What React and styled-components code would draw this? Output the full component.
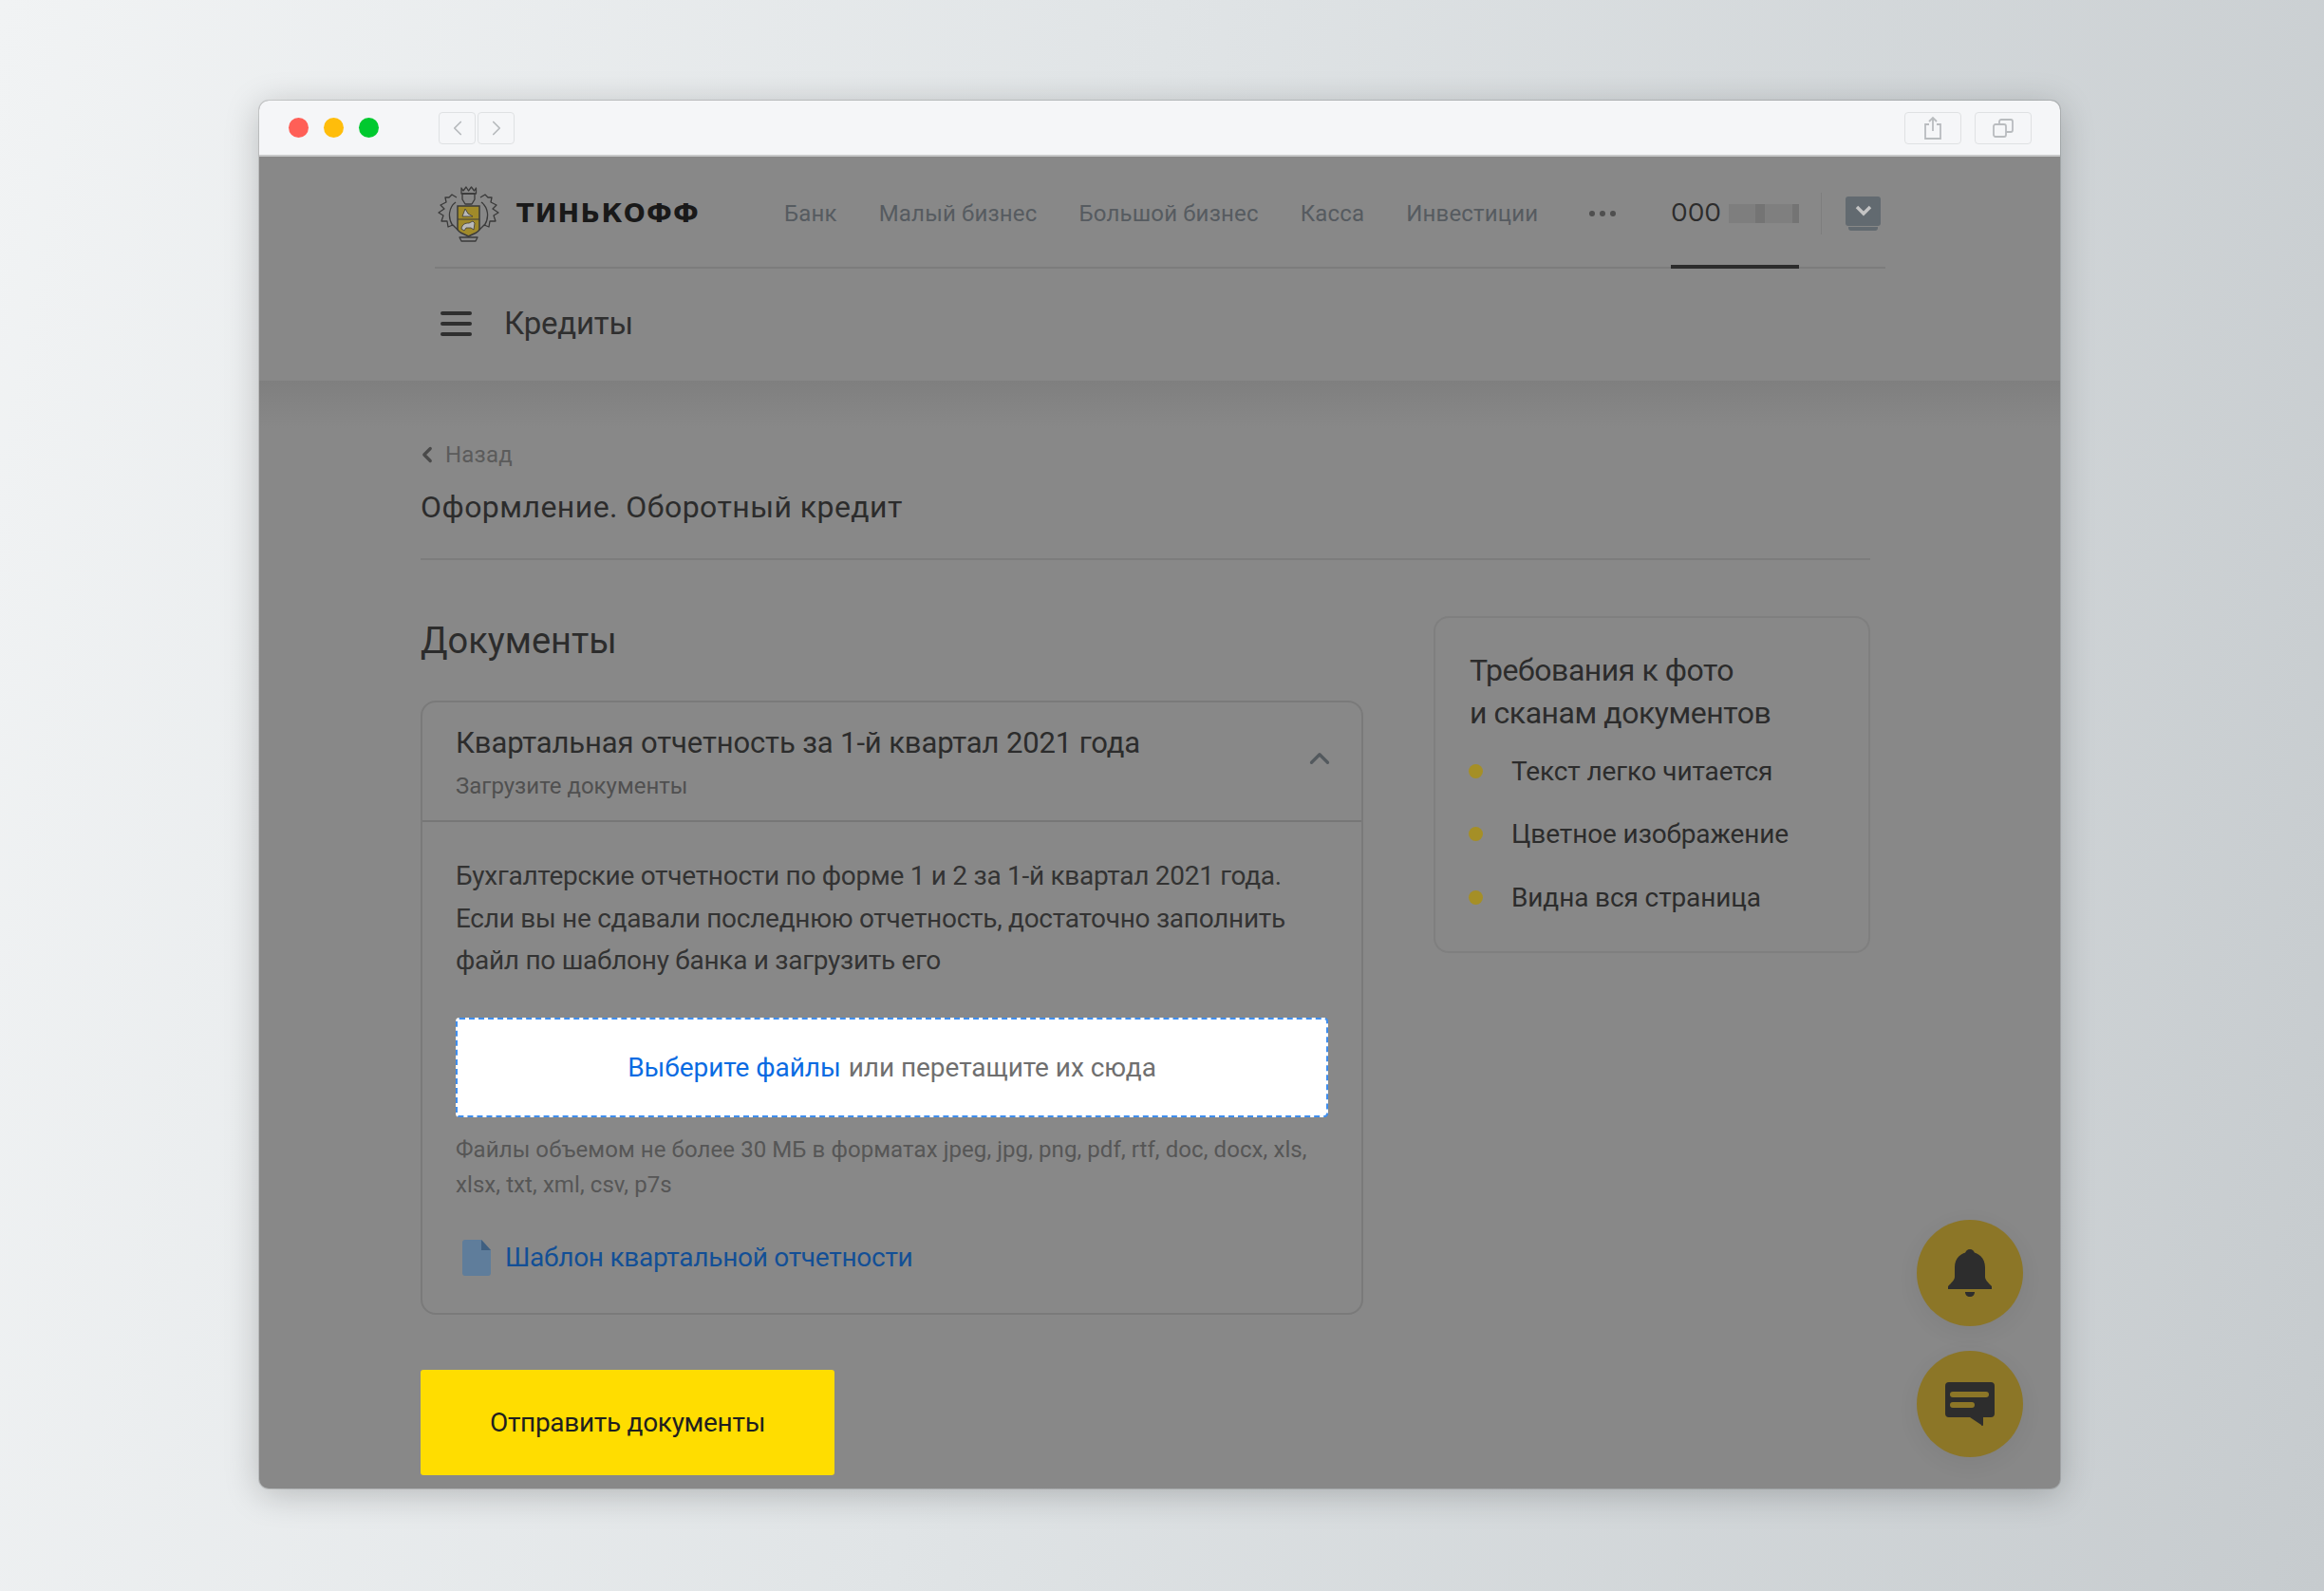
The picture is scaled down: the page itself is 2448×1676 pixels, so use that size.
import styled, { createGlobalStyle } from "styled-components";
import { ChevronLeft, ChevronRight, ChevronUp } from "lucide-react";

const Global = createGlobalStyle`
  html, body {
    margin: 0;
    padding: 0;
  }
  body {
    font-family: Roboto, "Liberation Sans", sans-serif;
  }
`;

const Page = styled.div`
  width: 2448px;
  height: 1676px;
  box-sizing: border-box;
  padding: 106px 278px 108px 273px;
  background: linear-gradient(100deg, #f1f3f4 0%, #e0e4e6 45%, #c6cbce 100%);
  overflow: hidden;
`;

const Window = styled.div`
  position: relative;
  height: 100%;
  border-radius: 10px;
  overflow: hidden;
  background: #888888;
  box-shadow: 0 6px 36px rgba(0, 0, 0, 0.22), 0 0 0 1px rgba(0, 0, 0, 0.12);
`;

const TitleBar = styled.div`
  height: 59px;
  box-sizing: border-box;
  display: flex;
  align-items: center;
  padding: 0 30px 0 31px;
  background: #f5f6f8;
  border-bottom: 2px solid #c8c9ca;
`;

const Light = styled.span`
  width: 21px;
  height: 21px;
  margin-right: 16px;
  border-radius: 50%;
  background: ${(p) => p.$color};
`;

const NavButtons = styled.div`
  display: flex;
  gap: 2px;
  margin-left: 47px;
`;

const BarButton = styled.div`
  width: ${(p) => p.$width}px;
  height: 34px;
  display: flex;
  align-items: center;
  justify-content: center;
  box-sizing: border-box;
  border: 1px solid #dfe1e3;
  border-radius: 4px;
  color: #b6b9bc;
`;

const BarRight = styled.div`
  display: flex;
  gap: 14px;
  margin-left: auto;
`;

const Header = styled.header`
  height: 236px;
  box-sizing: border-box;
  padding: 0 184px 0 185px;
  background: #888888;
`;

const TopRow = styled.div`
  height: 118px;
  box-sizing: border-box;
  display: flex;
  align-items: center;
  border-bottom: 2px solid #7c7c7c;
  padding-top: 3px;
`;

const LogoWrap = styled.div`
  display: flex;
  align-items: center;
  margin-left: 2px;
  gap: 17px;
  width: 366px;
`;

const LogoText = styled.span`
  font-family: "DejaVu Sans", sans-serif;
  font-weight: 700;
  font-size: 27px;
  letter-spacing: 1.3px;
  color: #191919;
`;

const Nav = styled.nav`
  display: flex;
  align-items: center;
  gap: 44px;
`;

const NavLink = styled.span`
  font-size: 24px;
  letter-spacing: 0.18px;
  color: #565b60;
`;

const Dots = styled.div`
  display: flex;
  gap: 5px;
  margin-left: 10px;
`;

const Dot = styled.span`
  width: 6px;
  height: 6px;
  border-radius: 50%;
  background: #4f4f4f;
`;

const Account = styled.div`
  position: relative;
  align-self: stretch;
  display: flex;
  align-items: center;
  gap: 8px;
  margin-left: 58px;
  font-size: 25px;
  letter-spacing: 0.4px;
  color: #2c2c2c;
  &::after {
    content: "";
    position: absolute;
    left: 0;
    right: 0;
    bottom: -2px;
    height: 4px;
    background: #2c2c2c;
  }
`;

const Redacted = styled.span`
  width: 74px;
  height: 20px;
  background: linear-gradient(
    90deg,
    #7e7e7e 0 38%,
    #747474 38% 51%,
    #7f7f7f 51% 90%,
    #747474 90% 100%
  );
`;

const Divider = styled.span`
  width: 1px;
  height: 44px;
  margin-left: 23px;
  background: #7e7e7e;
`;

const Tray = styled.div`
  display: flex;
  flex-direction: column;
  align-items: center;
  gap: 1px;
  margin-left: 25px;
`;

const TrayTop = styled.div`
  width: 37px;
  height: 31px;
  border-radius: 3px;
  display: flex;
  align-items: center;
  justify-content: center;
  background: #626a70;
  color: #c4c4c4;
`;

const TrayBottom = styled.div`
  width: 31px;
  height: 4px;
  border-radius: 0 0 3px 3px;
  background: #626a70;
`;

const MenuRow = styled.div`
  height: 118px;
  display: flex;
  align-items: center;
  gap: 34px;
  padding-left: 6px;
  padding-bottom: 3px;
  box-sizing: border-box;
`;

const Burger = styled.div`
  width: 33px;
  display: flex;
  flex-direction: column;
  gap: 7px;
`;

const BurgerBar = styled.span`
  height: 4px;
  border-radius: 2px;
  background: #2f2f2f;
`;

const MenuTitle = styled.div`
  font-size: 33px;
  letter-spacing: -0.2px;
  color: #2f2f2f;
`;

const Main = styled.main`
  padding: 0 200px 0 170px;
  background: linear-gradient(#7f7f7f 0, #888888 50px);
`;

const Back = styled.div`
  display: flex;
  align-items: center;
  gap: 6px;
  padding-top: 63px;
  height: 30px;
  font-size: 24px;
  letter-spacing: 0.2px;
  color: #5b5b5b;
`;

const PageTitle = styled.h1`
  margin: 21px 0 0;
  padding-bottom: 35px;
  font-size: 32px;
  line-height: 38px;
  font-weight: 400;
  letter-spacing: 0.45px;
  color: #2c2c2c;
  border-bottom: 2px solid #7c7c7c;
`;

const Columns = styled.div`
  display: grid;
  grid-template-columns: 993px 460px;
  column-gap: 74px;
`;

const Section = styled.h2`
  margin: 61px 0 39px;
  font-size: 38px;
  line-height: 48px;
  font-weight: 400;
  color: #2c2c2c;
`;

const Card = styled.section`
  box-sizing: border-box;
  border: 2px solid #7a7a7a;
  border-radius: 16px;
`;

const CardHead = styled.div`
  position: relative;
  height: 126px;
  box-sizing: border-box;
  padding: 24px 35px 0;
  border-bottom: 2px solid #777777;
`;

const CardTitle = styled.div`
  font-size: 31px;
  line-height: 38px;
  letter-spacing: -0.12px;
  color: #2c2c2c;
`;

const CardSub = styled.div`
  margin-top: 12px;
  font-size: 24px;
  line-height: 28px;
  color: #505050;
`;

const Toggle = styled.span`
  position: absolute;
  right: 27px;
  top: 42px;
  display: flex;
  color: #53595e;
`;

const CardBody = styled.div`
  padding: 35px 35px 0;
  height: 517px;
  box-sizing: border-box;
`;

const Lines = styled.p`
  margin: 0;
  font-size: 28px;
  line-height: 44.5px;
  letter-spacing: -0.28px;
  color: #333333;
`;

const Drop = styled.div`
  height: 105px;
  margin-top: 37px;
  box-sizing: border-box;
  display: flex;
  align-items: center;
  justify-content: center;
  gap: 8px;
  background: #ffffff;
  border: 2px dashed #3f8eee;
  border-radius: 4px;
  font-size: 28px;
  letter-spacing: -0.05px;
  color: #6f6f6f;
`;

const Pick = styled.span`
  color: #0a6be2;
`;

const Hint = styled.p`
  margin: 16px 0 0;
  font-size: 24px;
  line-height: 37px;
  letter-spacing: 0.08px;
  color: #565656;
`;

const FileLink = styled.div`
  display: flex;
  align-items: center;
  gap: 15px;
  margin-top: 38px;
  padding-left: 7px;
  font-size: 28px;
  line-height: 40px;
  letter-spacing: -0.27px;
  color: #124f96;
`;

const Submit = styled.button`
  display: block;
  width: 436px;
  height: 111px;
  margin-top: 58px;
  border: none;
  border-radius: 3px;
  background: #ffdd00;
  font-family: inherit;
  font-size: 28px;
  letter-spacing: -0.3px;
  color: #1f1f1f;
`;

const Aside = styled.aside`
  box-sizing: border-box;
  height: 355px;
  margin-top: 59px;
  padding: 33px 36px 0;
  border: 2px solid #7f7f7f;
  border-radius: 16px;
`;

const AsideTitle = styled.div`
  font-size: 32px;
  line-height: 45px;
  letter-spacing: -0.45px;
  color: #2c2c2c;
`;

const List = styled.ul`
  margin: 5px 0 0;
  padding: 0;
  list-style: none;
`;

const Item = styled.li`
  display: flex;
  align-items: center;
  gap: 30px;
  height: 66.5px;
  font-size: 28px;
  letter-spacing: -0.12px;
  color: #2c2c2c;
`;

const Bullet = styled.span`
  width: 15px;
  height: 15px;
  margin-left: -1px;
  border-radius: 50%;
  background: #a58f26;
`;

const Fabs = styled.div`
  position: absolute;
  right: 39px;
  bottom: 33px;
  display: flex;
  flex-direction: column;
  gap: 26px;
`;

const Fab = styled.div`
  width: 112px;
  height: 112px;
  border-radius: 50%;
  display: flex;
  align-items: center;
  justify-content: center;
  background: #8c7627;
  box-shadow: 0 6px 24px rgba(0, 0, 0, 0.06);
`;

const Crest = () => (
  <svg width="67" height="60" viewBox="0 0 67 60" fill="none">
    {/* mantling */}
    <g stroke="#3a3a3a" strokeWidth="1.3" strokeLinejoin="round">
      <path d="M21 13l-5-3-3 3-4 0 1 5-6 3 4 4-6 4 5 3-2 6 6 0 1 6 5-2 5 5 3 2" />
      <path d="M46 13l5-3 3 3 4 0-1 5 6 3-4 4 6 4-5 3 2 6-6 0-1 6-5-2-5 5-3 2" />
      <path d="M20 18c-7 5-9 16-3 25M47 18c7 5 9 16 3 25" />
      <path d="M26 3l2 3 3-4 2.500 4 3-4 3 4 2-3 0 6h-15.500z" />
      <path d="M27 9h13v6l-3 5h-7l-3-5z" />
      <path d="M24 55h19l-2 4h-15z" />
    </g>
    {/* shield */}
    <path
      d="M22 22h23v24c0 4-6 5-11.500 8-5.500-3-11.500-4-11.500-8z"
      fill="#a08a2a"
      stroke="#3a3a3a"
      strokeWidth="1.500"
    />
    <path d="M22 36h23" stroke="#3a3a3a" strokeWidth="1.200" />
    <path d="M27 33l3-8 3 5 5 3z" fill="#b9b9b9" stroke="#3a3a3a" strokeWidth="0.800" />
    <path d="M26 46c1-5 4-6 8-6l4-2 2 2-1 7-3-2h-5l-2 3z" fill="#b9b9b9" stroke="#3a3a3a" strokeWidth="0.800" />
  </svg>
);

const ShareIcon = () => (
  <svg width="20" height="26" viewBox="0 0 20 26" fill="none" stroke="#b9bcbf" strokeWidth="1.800">
    <path d="M6 9H2v15h16V9h-4" />
    <path d="M10 16V2M6 6l4-4 4 4" />
  </svg>
);

const CopyIcon = () => (
  <svg width="22" height="20" viewBox="0 0 22 20" fill="none" stroke="#b9bcbf" strokeWidth="1.800">
    <rect x="1" y="6" width="13" height="13" rx="2" />
    <path d="M7 6V3a2 2 0 0 1 2-2h10a2 2 0 0 1 2 2v9a2 2 0 0 1-2 2h-5" />
  </svg>
);

const DocIcon = () => (
  <svg width="30" height="38" viewBox="0 0 30 38">
    <path d="M3 0h17l10 11v24a3 3 0 0 1-3 3H3a3 3 0 0 1-3-3V3a3 3 0 0 1 3-3z" fill="#5f7d9b" />
    <path d="M20 0l10 11h-10z" fill="#3f5f80" />
  </svg>
);

const BellIcon = () => (
  <svg width="46" height="50" viewBox="0 0 46 50" fill="#2d2d2d">
    <circle cx="23" cy="5" r="5" />
    <path d="M23 3c-9 0-16 6-16 16v10c0 3-3 6-7 10v3h46v-3c-4-4-7-7-7-10V19c0-10-7-16-16-16z" />
    <path d="M18 45h10c0 3-2 5-5 5s-5-2-5-5z" />
  </svg>
);

const ChatIcon = () => (
  <svg width="52" height="46" viewBox="0 0 52 46">
    <path
      d="M4 0h44a4 4 0 0 1 4 4v29a4 4 0 0 1-4 4H40v8a1 1 0 0 1-2 0L26 37H4a4 4 0 0 1-4-4V4a4 4 0 0 1 4-4z"
      fill="#2d2d2d"
    />
    <rect x="5" y="10" width="41" height="6" rx="3" fill="#8c7627" />
    <rect x="5" y="21" width="26" height="6" rx="3" fill="#8c7627" />
  </svg>
);

const requirements = ["Текст легко читается", "Цветное изображение", "Видна вся страница"];
const links = ["Банк", "Малый бизнес", "Большой бизнес", "Касса", "Инвестиции"];

export default function App() {
  return (
    <Page>
      <Global />
      <Window>
        <TitleBar>
          <Light $color="#ff5f57" />
          <Light $color="#ffbd0b" />
          <Light $color="#00c92f" />
          <NavButtons>
            <BarButton $width={39}>
              <ChevronLeft size={26} strokeWidth={1.6} />
            </BarButton>
            <BarButton $width={39}>
              <ChevronRight size={26} strokeWidth={1.6} />
            </BarButton>
          </NavButtons>
          <BarRight>
            <BarButton $width={60}>
              <ShareIcon />
            </BarButton>
            <BarButton $width={60}>
              <CopyIcon />
            </BarButton>
          </BarRight>
        </TitleBar>

        <Header>
          <TopRow>
            <LogoWrap>
              <Crest />
              <LogoText>ТИНЬКОФФ</LogoText>
            </LogoWrap>
            <Nav>
              {links.map((l) => (
                <NavLink key={l}>{l}</NavLink>
              ))}
              <Dots>
                <Dot />
                <Dot />
                <Dot />
              </Dots>
            </Nav>
            <Account>
              ООО <Redacted />
            </Account>
            <Divider />
            <Tray>
              <TrayTop>
                <svg width="18" height="12" viewBox="0 0 18 12" fill="none" stroke="currentColor" strokeWidth="3.500">
                  <path d="M2 2l7 7 7-7" />
                </svg>
              </TrayTop>
              <TrayBottom />
            </Tray>
          </TopRow>
          <MenuRow>
            <Burger>
              <BurgerBar />
              <BurgerBar />
              <BurgerBar />
            </Burger>
            <MenuTitle>Кредиты</MenuTitle>
          </MenuRow>
        </Header>

        <Main>
          <Back>
            <ChevronLeft size={26} strokeWidth={3} color="#4a4a4a" style={{ marginLeft: -6 }} />
            Назад
          </Back>
          <PageTitle>Оформление. Оборотный кредит</PageTitle>
          <Columns>
            <div>
              <Section>Документы</Section>
              <Card>
                <CardHead>
                  <CardTitle>Квартальная отчетность за 1-й квартал 2021 года</CardTitle>
                  <CardSub>Загрузите документы</CardSub>
                  <Toggle>
                    <ChevronUp size={34} strokeWidth={2.3} />
                  </Toggle>
                </CardHead>
                <CardBody>
                  <Lines>
                    Бухгалтерские отчетности по форме 1 и 2 за 1-й квартал 2021 года.
                    <br />
                    Если вы не сдавали последнюю отчетность, достаточно заполнить
                    <br />
                    файл по шаблону банка и загрузить его
                  </Lines>
                  <Drop>
                    <Pick>Выберите файлы</Pick> или перетащите их сюда
                  </Drop>
                  <Hint>
                    Файлы объемом не более 30 МБ в форматах jpeg, jpg, png, pdf, rtf, doc, docx, xls,
                    <br />
                    xlsx, txt, xml, csv, p7s
                  </Hint>
                  <FileLink>
                    <DocIcon />
                    Шаблон квартальной отчетности
                  </FileLink>
                </CardBody>
              </Card>
              <Submit>Отправить документы</Submit>
            </div>
            <Aside>
              <AsideTitle>
                Требования к фото
                <br />и сканам документов
              </AsideTitle>
              <List>
                {requirements.map((r) => (
                  <Item key={r}>
                    <Bullet />
                    {r}
                  </Item>
                ))}
              </List>
            </Aside>
          </Columns>
        </Main>

        <Fabs>
          <Fab>
            <BellIcon />
          </Fab>
          <Fab>
            <ChatIcon />
          </Fab>
        </Fabs>
      </Window>
    </Page>
  );
}
